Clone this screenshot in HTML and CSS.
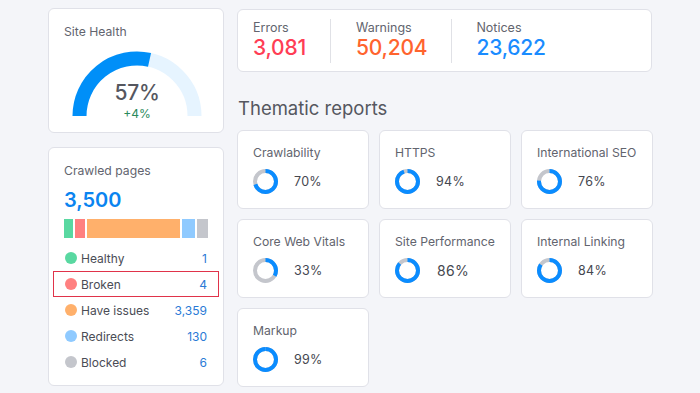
FILE: index.html
```html
<!DOCTYPE html>
<html>
<head>
<meta charset="utf-8">
<link rel="stylesheet" href="styles.css">
</head>
<body>
<div class="page">
  <div class="left">
    <div class="card health">
      <div class="card-title">Site Health</div>
      <div class="gauge">
        <svg width="130" height="66" viewBox="0 0 130 66">
          <path d="M7.5 65 A57.5 57.5 0 0 1 122.5 65" fill="none" stroke="#e6f4ff" stroke-width="14"/>
          <path d="M7.5 65 A57.5 57.5 0 0 1 77.54 8.89" fill="none" stroke="#008ff8" stroke-width="14"/>
        </svg>
        <div class="gauge-text">
          <div class="gauge-value">57%</div>
          <div class="gauge-delta">+4%</div>
        </div>
      </div>
    </div>
    <div class="card crawled">
      <div class="card-title">Crawled pages</div>
      <div class="crawled-total">3,500</div>
      <div class="bar">
        <span class="seg c-green" style="width:9px"></span>
        <span class="seg c-red" style="width:10px"></span>
        <span class="seg c-orange" style="width:95px"></span>
        <span class="seg c-lblue" style="width:14px"></span>
        <span class="seg c-gray" style="width:11px"></span>
      </div>
      <ul class="legend">
        <li class="row"><span class="dot c-green"></span><span class="label">Healthy</span><span class="val">1</span></li>
        <li class="row selected"><span class="dot c-red"></span><span class="label">Broken</span><span class="val">4</span></li>
        <li class="row"><span class="dot c-orange"></span><span class="label">Have issues</span><span class="val">3,359</span></li>
        <li class="row"><span class="dot c-lblue"></span><span class="label">Redirects</span><span class="val">130</span></li>
        <li class="row"><span class="dot c-gray"></span><span class="label">Blocked</span><span class="val">6</span></li>
      </ul>
    </div>
  </div>
  <div class="right">
    <div class="card stats">
      <div class="stat">
        <div class="stat-label">Errors</div>
        <div class="stat-value errors">3,081</div>
      </div>
      <div class="stat">
        <div class="stat-label">Warnings</div>
        <div class="stat-value warnings">50,204</div>
      </div>
      <div class="stat">
        <div class="stat-label">Notices</div>
        <div class="stat-value notices">23,622</div>
      </div>
    </div>
    <h2 class="section-title">Thematic reports</h2>
    <div class="reports">
      <div class="card report">
        <div class="report-title">Crawlability</div>
        <div class="report-body">
          <svg class="donut" width="25" height="25" viewBox="0 0 25 25"><circle cx="12.5" cy="12.5" r="10.5" class="ring-bg"/><circle cx="12.5" cy="12.5" r="10.5" class="ring-fg" stroke-dasharray="46.18 65.97"/></svg>
          <span class="pct">70%</span>
        </div>
      </div>
      <div class="card report">
        <div class="report-title">HTTPS</div>
        <div class="report-body">
          <svg class="donut" width="25" height="25" viewBox="0 0 25 25"><circle cx="12.5" cy="12.5" r="10.5" class="ring-bg"/><circle cx="12.5" cy="12.5" r="10.5" class="ring-fg" stroke-dasharray="62.01 65.97"/></svg>
          <span class="pct">94%</span>
        </div>
      </div>
      <div class="card report">
        <div class="report-title">International SEO</div>
        <div class="report-body">
          <svg class="donut" width="25" height="25" viewBox="0 0 25 25"><circle cx="12.5" cy="12.5" r="10.5" class="ring-bg"/><circle cx="12.5" cy="12.5" r="10.5" class="ring-fg" stroke-dasharray="50.14 65.97"/></svg>
          <span class="pct">76%</span>
        </div>
      </div>
      <div class="card report">
        <div class="report-title">Core Web Vitals</div>
        <div class="report-body">
          <svg class="donut" width="25" height="25" viewBox="0 0 25 25"><circle cx="12.5" cy="12.5" r="10.5" class="ring-bg"/><circle cx="12.5" cy="12.5" r="10.5" class="ring-fg" stroke-dasharray="21.77 65.97"/></svg>
          <span class="pct">33%</span>
        </div>
      </div>
      <div class="card report">
        <div class="report-title">Site Performance</div>
        <div class="report-body">
          <svg class="donut" width="25" height="25" viewBox="0 0 25 25"><circle cx="12.5" cy="12.5" r="10.5" class="ring-bg"/><circle cx="12.5" cy="12.5" r="10.5" class="ring-fg" stroke-dasharray="56.73 65.97"/></svg>
          <span class="pct pct-lg">86%</span>
        </div>
      </div>
      <div class="card report">
        <div class="report-title">Internal Linking</div>
        <div class="report-body">
          <svg class="donut" width="25" height="25" viewBox="0 0 25 25"><circle cx="12.5" cy="12.5" r="10.5" class="ring-bg"/><circle cx="12.5" cy="12.5" r="10.5" class="ring-fg" stroke-dasharray="55.41 65.97"/></svg>
          <span class="pct">84%</span>
        </div>
      </div>
      <div class="card report">
        <div class="report-title">Markup</div>
        <div class="report-body">
          <svg class="donut" width="25" height="25" viewBox="0 0 25 25"><circle cx="12.5" cy="12.5" r="10.5" class="ring-bg"/><circle cx="12.5" cy="12.5" r="10.5" class="ring-fg" stroke-dasharray="65.31 65.97"/></svg>
          <span class="pct">99%</span>
        </div>
      </div>
    </div>
  </div>
</div>
</body>
</html>
```

FILE: styles.css
```css
* { box-sizing: border-box; }
html, body { margin: 0; padding: 0; }
body {
  background: #f4f5f9;
  font-family: Inter, "Noto Sans", sans-serif;
  color: #333;
  width: 700px;
  height: 393px;
  overflow: hidden;
}
.page {
  display: flex;
  gap: 13px;
  padding: 8px 0 0 48px;
}
.card {
  background: #fff;
  border: 1px solid #e0e1e8;
  border-radius: 6px;
}
.left {
  width: 176px;
  display: flex;
  flex-direction: column;
  gap: 14px;
}
.card-title {
  font-size: 12.2px;
  line-height: 16px;
  color: #62646e;
}
.health {
  height: 125px;
  padding: 15px 15px 0 15px;
}
.gauge {
  position: relative;
  width: 130px;
  height: 66px;
  margin: 11px auto 0;
  left: 1px;
}
.gauge svg { display: block; }
.gauge-text {
  position: absolute;
  left: 0;
  right: 0;
  top: 30px;
  text-align: center;
}
.gauge-value {
  font-size: 21px;
  line-height: 24px;
  font-weight: 500;
  color: #55575f;
  letter-spacing: -0.3px;
}
.gauge-delta {
  font-size: 12px;
  line-height: 14px;
  color: #2a8a5c;
  margin-top: 2px;
}
.crawled {
  height: 239px;
  padding: 15px 15px 0 15px;
}
.crawled-total {
  font-size: 20px;
  line-height: 24px;
  font-weight: 600;
  color: #0a84f0;
  margin-top: 9px;
}
.bar {
  display: flex;
  gap: 2px;
  height: 19px;
  margin-top: 7px;
}
.seg { display: block; height: 100%; }
.c-green { background: #59d8a1; }
.c-red { background: #ff8080; }
.c-orange { background: #ffb06b; }
.c-lblue { background: #8fcaff; }
.c-gray { background: #c4c6cc; }
.legend {
  list-style: none;
  margin: 7px -11px 0;
  padding: 0;
}
.row {
  display: flex;
  align-items: center;
  height: 26px;
  padding: 0 11px;
  font-size: 12px;
  color: #4a4c55;
  border: 1px solid transparent;
}
.row.selected { border-color: #e0334a; }
.dot {
  width: 12px;
  height: 12px;
  border-radius: 50%;
  margin-right: 4px;
  flex: none;
}
.label { flex: 1; }
.val { color: #2a7ad6; }
.right {
  width: 415px;
  padding-top: 1px;
}
.stats {
  height: 63px;
  display: flex;
  align-items: center;
  padding: 0 15px;
}
.stat {
  height: 44px;
  padding: 0 24px;
  border-left: 1px solid #e0e1e6;
  display: flex;
  flex-direction: column;
  justify-content: center;
}
.stat:first-child { padding-left: 0; border-left: none; padding-right: 24px; }
.stat:nth-child(2) { padding-left: 25px; padding-right: 24px; }
.stat-label {
  font-size: 12.5px;
  line-height: 15px;
  color: #62646e;
}
.stat-value {
  font-size: 21px;
  line-height: 26px;
  font-weight: 500;
  letter-spacing: -0.2px;
}
.errors { color: #ff3d55; }
.warnings { color: #ff642e; }
.notices { color: #1a8cff; }
.section-title {
  margin: 24px 0 10px 1px;
  font-size: 18.5px;
  line-height: 24px;
  font-weight: 400;
  color: #55575f;
}
.reports {
  display: grid;
  grid-template-columns: repeat(3, 132px);
  grid-auto-rows: 79px;
  column-gap: 10px;
  row-gap: 10px;
}
.report {
  padding: 14px 15px 0 15px;
}
.report-title {
  font-size: 12.2px;
  line-height: 16px;
  color: #62646e;
  white-space: nowrap;
}
.report-body {
  display: flex;
  align-items: center;
  margin-top: 8px;
}
.donut {
  display: block;
  transform: rotate(-90deg);
  flex: none;
}
.ring-bg { fill: none; stroke: #c4c6cc; stroke-width: 4; }
.ring-fg { fill: none; stroke: #0a8cff; stroke-width: 4; }
.pct {
  margin-left: 16px;
  font-size: 12.5px;
  color: #45474f;
  font-weight: 400;
  letter-spacing: 0.3px;
}
.pct-lg { font-size: 14px; margin-left: 17px; }
```
